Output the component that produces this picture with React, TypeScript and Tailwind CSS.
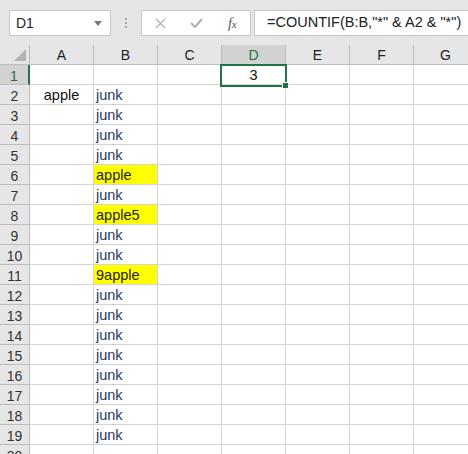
import React from "react";

const COLS = ["A", "B", "C", "D", "E", "F", "G"];

function bValue(r: number): string {
  if (r === 1) return "";
  if (r === 6) return "apple";
  if (r === 8) return "apple5";
  if (r === 11) return "9apple";
  return "junk";
}

export default function App() {
  const rows = Array.from({ length: 20 }, (_, i) => i + 1);
  return (
    <div
      className="w-[468px] h-[454px] overflow-hidden bg-white relative"
      style={{ fontFamily: '"Liberation Sans", Arial, sans-serif' }}
    >
      {/* formula bar */}
      <div className="h-[45px] bg-[#e6e6e6] flex items-start pt-[10px] pl-[9px]">
        <div className="w-[102px] h-[26px] bg-white border border-[#c6c6c6] flex items-center pl-[6px] pr-[8px] text-[14px] text-[#222]">
          <span className="flex-1">D1</span>
          <svg width="8" height="5" viewBox="0 0 8 5">
            <path d="M0 0 L8 0 L4 5 Z" fill="#7a7a7a" />
          </svg>
        </div>
        <div className="w-[30px] h-[26px] flex flex-col items-center justify-center gap-[2px]">
          <div className="w-[2px] h-[2px] bg-[#a6a6a6]" />
          <div className="w-[2px] h-[2px] bg-[#a6a6a6]" />
          <div className="w-[2px] h-[2px] bg-[#a6a6a6]" />
        </div>
        <div className="w-[110px] h-[26px] bg-white border border-[#c6c6c6] flex items-center">
          <div className="w-[38px] flex justify-center">
            <svg width="11" height="11" viewBox="0 0 11 11">
              <path d="M1 1 L10 10 M10 1 L1 10" stroke="#b0b0b0" strokeWidth="1.3" />
            </svg>
          </div>
          <div className="w-[36px] flex justify-center">
            <svg width="13" height="10" viewBox="0 0 13 10">
              <path d="M1 5 L5 9 L12 1" stroke="#b0b0b0" strokeWidth="2" fill="none" />
            </svg>
          </div>
          <div
            className="w-[36px] flex justify-center italic text-[14px] text-[#555]"
            style={{ fontFamily: '"Liberation Serif", serif' }}
          >
            f<span className="text-[11px] mt-[3px]">x</span>
          </div>
        </div>
        <div className="ml-[3px] flex-1 h-[26px] bg-white border border-[#c6c6c6] border-r-0 flex items-center pl-[12px] text-[14.5px] text-[#222]">
          =COUNTIF(B:B,"*" &amp; A2 &amp; "*")
        </div>
      </div>

      {/* grid */}
      <div className="relative">
        <div
          className="grid"
          style={{ gridTemplateColumns: "30px repeat(7, 64px)" }}
        >
          {/* header row */}
          <div className="h-[20px] bg-[#e6e6e6] border-r border-b border-[#bdbdbd] relative">
            <svg className="absolute right-[3px] bottom-[3px]" width="12" height="12" viewBox="0 0 12 12">
              <path d="M12 0 L12 12 L0 12 Z" fill="#b4b4b4" />
            </svg>
          </div>
          {COLS.map((c) => (
            <div
              key={c}
              className={`h-[20px] border-r border-b border-[#bdbdbd] flex items-center justify-center pt-[2px] text-[14px] ${
                c === "D" ? "bg-[#d2d2d2] text-[#217346]" : "bg-[#e6e6e6] text-[#222]"
              }`}
            >
              {c}
            </div>
          ))}
          {rows.map((r) => (
            <React.Fragment key={r}>
              <div
                className={`h-[20px] border-b border-[#bdbdbd] flex items-center justify-center pt-[3px] text-[14px] ${
                  r === 1
                    ? "bg-[#d2d2d2] text-[#217346] border-r-2 border-r-[#217346]"
                    : "bg-[#e6e6e6] text-[#333] border-r border-r-[#bdbdbd]"
                }`}
              >
                {r}
              </div>
              {COLS.map((c) => {
                let content: string = "";
                let cls = "";
                if (c === "A" && r === 2) {
                  content = "apple";
                  cls = "justify-center text-[#111]";
                } else if (c === "B") {
                  content = bValue(r);
                  cls = "justify-start pl-[2px] text-[#1f3864]";
                  if (r === 6 || r === 8 || r === 11) cls += " bg-[#ffff00] text-[#222]";
                } else if (c === "D" && r === 1) {
                  content = "3";
                  cls = "justify-center text-[#111]";
                }
                if (r === 20) content = "";
                return (
                  <div
                    key={c}
                    className={`h-[20px] border-r border-b border-[#d4d4d4] flex items-center pt-[3px] text-[14.5px] overflow-hidden whitespace-nowrap ${cls}`}
                  >
                    {content}
                  </div>
                );
              })}
            </React.Fragment>
          ))}
        </div>
        {/* selection */}
        <div className="absolute left-[220px] top-[19px] w-[67px] h-[23px] border-2 border-[#217346] pointer-events-none" />
        <div className="absolute left-[282px] top-[37px] w-[7px] h-[7px] bg-[#217346] border border-white" />
      </div>
    </div>
  );
}
